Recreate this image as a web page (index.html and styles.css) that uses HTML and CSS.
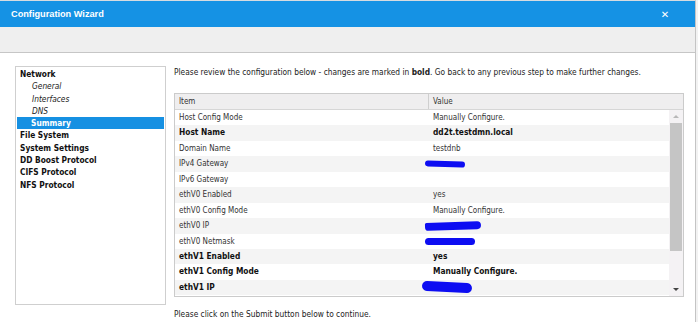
FILE: index.html
```html
<!DOCTYPE html>
<html lang="en">
<head>
    <meta charset="UTF-8">
    <title>Configuration Wizard</title>
    <link rel="stylesheet" href="styles.css">
</head>
<body>
    <div class="wizard">
        <header class="titlebar">
            <span class="title">Configuration Wizard</span>
            <span class="close">&#x2715;</span>
        </header>
        <div class="toolbar"></div>

        <div class="content">
            <!-- steps -->
            <ul class="steps">
                <li class="step">Network</li>
                <li class="sub">General</li>
                <li class="sub">Interfaces</li>
                <li class="sub">DNS</li>
                <li class="sub selected">Summary</li>
                <li class="step">File System</li>
                <li class="step">System Settings</li>
                <li class="step">DD Boost Protocol</li>
                <li class="step">CIFS Protocol</li>
                <li class="step">NFS Protocol</li>
            </ul>

            <div class="panel">
                <p class="intro">Please review the configuration below - changes are marked in <b>bold</b>. Go back to any previous step to make further changes.</p>

                <div class="grid">
                    <div class="grid-head">
                        <div class="col-item">Item</div>
                        <div class="col-value">Value</div>
                    </div>
                    <div class="grid-body">
                        <div class="rows">
                            <div class="row"><div class="col-item">Host Config Mode</div><div class="col-value">Manually Configure.</div></div>
                            <div class="row changed"><div class="col-item">Host Name</div><div class="col-value">dd2t.testdmn.local</div></div>
                            <div class="row"><div class="col-item">Domain Name</div><div class="col-value">testdnb</div></div>
                            <div class="row"><div class="col-item">IPv4 Gateway</div><div class="col-value"><span class="redact r1"></span></div></div>
                            <div class="row"><div class="col-item">IPv6 Gateway</div><div class="col-value"></div></div>
                            <div class="row"><div class="col-item">ethV0 Enabled</div><div class="col-value">yes</div></div>
                            <div class="row"><div class="col-item">ethV0 Config Mode</div><div class="col-value">Manually Configure.</div></div>
                            <div class="row"><div class="col-item">ethV0 IP</div><div class="col-value"><span class="redact r2"></span></div></div>
                            <div class="row"><div class="col-item">ethV0 Netmask</div><div class="col-value"><span class="redact r3"></span></div></div>
                            <div class="row changed"><div class="col-item">ethV1 Enabled</div><div class="col-value">yes</div></div>
                            <div class="row changed"><div class="col-item">ethV1 Config Mode</div><div class="col-value">Manually Configure.</div></div>
                            <div class="row changed"><div class="col-item">ethV1 IP</div><div class="col-value"><span class="redact r4"></span></div></div>
                        </div>
                        <div class="scrollbar">
                            <span class="arrow up"></span>
                            <div class="track"><div class="thumb"></div></div>
                            <span class="arrow down"></span>
                        </div>
                    </div>
                </div>

                <p class="outro">Please click on the Submit button below to continue.</p>
            </div>
        </div>
    </div>
</body>
</html>
```
FILE: styles.css
```css
body {
    margin: 0;
    padding: 0;
    width: 698px;
    height: 322px;
    overflow: hidden;
    background-color: #f2f2f2;
    font-family: 'DejaVu Sans Condensed', 'Liberation Sans', sans-serif;
    color: #333;
}
.wizard {
    width: 696px;
    height: 322px;
    background-color: #fff;
    border-right: 1px solid #c4c4c4;
    border-top: 1px solid #d6dbe0;
    box-sizing: border-box;
}
.titlebar {
    height: 26px;
    background-color: #1592e4;
    color: white;
    display: flex;
    align-items: center;
    justify-content: space-between;
    padding: 0 0 0 11px;
}
.title {
    font-family: 'Liberation Sans', Arial, sans-serif;
    font-size: 9.2px;
    font-weight: bold;
}
.close {
    font-family: 'DejaVu Sans', sans-serif;
    font-size: 10px;
    font-weight: bold;
    width: 60px;
    text-align: center;
}
.toolbar {
    height: 25px;
    background-color: #efefef;
    border-bottom: 1px solid #c6c6c6;
}
.content {
    display: flex;
    padding: 13px 0 0 15px;
}
.steps {
    list-style: none;
    margin: 0;
    padding: 1px 1px 0;
    width: 147px;
    height: 236px;
    border: 1px solid #cfcfcf;
    font-size: 8.3px;
    color: #111;
}
.steps li {
    height: 12.3px;
    line-height: 12.3px;
    padding-left: 3px;
}
.steps .step {
    font-weight: bold;
}
.steps .sub {
    font-style: italic;
    padding-left: 15px;
    color: #222;
}
.steps .sub.selected {
    background-color: #1690e2;
    color: white;
    font-style: normal;
    font-weight: bold;
    padding-left: 14px;
}
.panel {
    margin-left: 8px;
    width: 510px;
}
.intro {
    margin: 0;
    font-size: 8.3px;
    line-height: 12px;
    color: #222;
}
.grid {
    margin-top: 15px;
    border: 1px solid #cbcbcb;
    font-size: 8px;
    color: #333;
}
.grid-head {
    display: flex;
    height: 15px;
    line-height: 15px;
    background-color: #efeeef;
    border-bottom: 1px solid #d6d6d6;
}
.grid-head .col-item {
    border-right: 1px solid #cfcfcf;
}
.col-item {
    width: 250px;
    padding-left: 4px;
}
.grid-head .col-item {
    width: 249px;
}
.col-value {
    flex: 1;
    padding-left: 4px;
}
.grid-body {
    display: flex;
    height: 186px;
    overflow: hidden;
}
.rows {
    flex: 1;
}
.row {
    display: flex;
    height: 15.45px;
    line-height: 15.45px;
}
.row:nth-child(even) {
    background-color: #f4f4f4;
}
.row.changed {
    font-size: 8.3px;
    font-weight: bold;
    color: #111;
}
.redact {
    display: inline-block;
    background-color: #0d0df2;
    border-radius: 4px;
    vertical-align: middle;
    margin-left: -8px;
}
.r1 { width: 40px; height: 6px; transform: rotate(2deg); }
.r2 { width: 56px; height: 8px; transform: rotate(-2deg); border-radius: 2px 5px 5px 4px; }
.r3 { width: 50px; height: 7px; }
.r4 { width: 50px; height: 10px; margin-left: -11px; transform: rotate(3deg); border-radius: 6px; }
.scrollbar {
    width: 14px;
    background-color: #f4f2f4;
    display: flex;
    flex-direction: column;
    align-items: center;
}
.arrow {
    width: 0;
    height: 0;
    border-left: 3px solid transparent;
    border-right: 3px solid transparent;
    margin: 5px 0;
}
.arrow.up {
    border-bottom: 3px solid #b8b8b8;
}
.arrow.down {
    border-top: 3px solid #444;
}
.track {
    flex: 1;
    width: 12px;
}
.thumb {
    height: 128px;
    background-color: #c5c5c5;
}
.outro {
    margin: 12px 0 0;
    font-size: 8.3px;
    color: #222;
}
```
